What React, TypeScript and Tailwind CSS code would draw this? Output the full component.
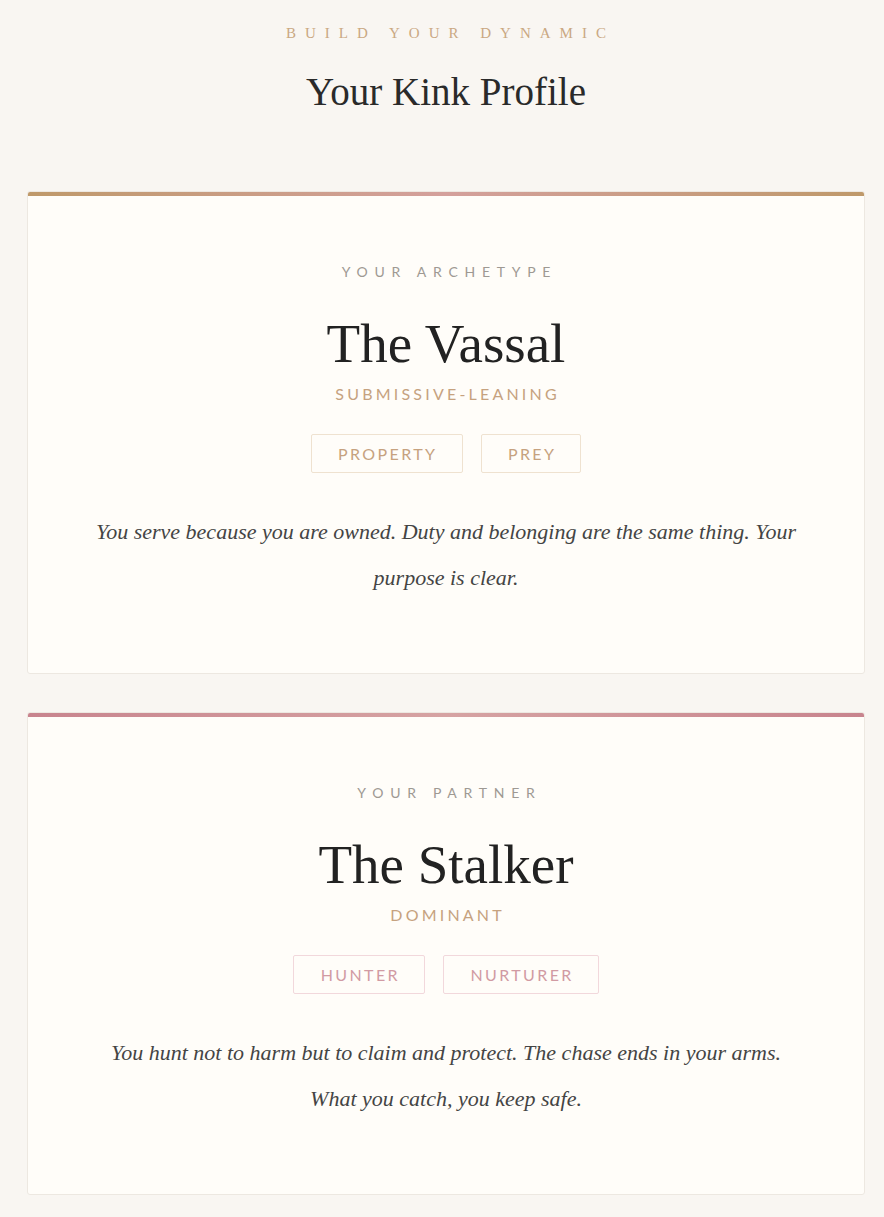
const SERIF = { fontFamily: '"Liberation Serif", "Times New Roman", serif' };
const SANS = { fontFamily: 'Lato, "Open Sans", sans-serif' };

type Tone = "gold" | "rose";

const TONES: Record<Tone, { bar: string; tag: string }> = {
  gold: {
    bar: "bg-linear-to-r from-[#bf996a] via-[#d4a09c] to-[#bf996a]",
    tag: "border-[#efe2d0] text-[#c6a27f]",
  },
  rose: {
    bar: "bg-linear-to-r from-[#c8848e] via-[#d6a3a3] to-[#c8848e]",
    tag: "border-[#f2d8dc] text-[#d19aa3]",
  },
};

function ProfileCard({
  label,
  name,
  leaning,
  tags,
  blurb,
  tone,
}: {
  label: string;
  name: string;
  leaning: string;
  tags: string[];
  blurb: string;
  tone: Tone;
}) {
  const t = TONES[tone];
  return (
    <div className="overflow-hidden rounded-[3px] border border-[#ede8e1] bg-[#fffdf9]">
      <div className={`h-[4px] ${t.bar}`} />
      <div className="flex flex-col items-center px-16 pt-[66px] pb-[72px] text-center">
        <p
          className="pl-[0.48em] text-[14px] leading-5 tracking-[0.48em] text-[#9e9993]"
          style={SANS}
        >
          {label}
        </p>
        <h2
          className="mt-[31px] text-[55px] leading-[62px] text-[#222]"
          style={SERIF}
        >
          {name}
        </h2>
        <p
          className="mt-[9px] pl-[0.2em] text-[16px] leading-5 tracking-[0.2em] text-[#c6a27f]"
          style={SANS}
        >
          {leaning}
        </p>
        <div className="mt-[30px] flex gap-[18px]">
          {tags.map((tag) => (
            <span
              key={tag}
              className={`rounded-[2px] border px-6 py-[9px] pl-[calc(1.5rem+0.15em)] text-[16px] leading-[19px] tracking-[0.15em] ${t.tag}`}
              style={SANS}
            >
              {tag}
            </span>
          ))}
        </div>
        <p
          className="mt-[36px] text-[22px] italic leading-[46px] text-[#444]"
          style={SERIF}
        >
          {blurb}
        </p>
      </div>
    </div>
  );
}

export default function App() {
  return (
    <div className="min-h-[1217px] bg-[#f9f6f2] pt-[22px] pr-[19px] pb-6 pl-[27px]">
      <header className="flex flex-col items-center">
        <p
          className="pl-[0.6em] text-[15px] leading-[22px] tracking-[0.6em] text-[#caa882]"
          style={SERIF}
        >
          BUILD YOUR DYNAMIC
        </p>
        <h1 className="mt-[24px] text-[39px] leading-[48px] text-[#2a2a2a]" style={SERIF}>
          Your Kink Profile
        </h1>
      </header>

      <div className="mt-[75px] flex flex-col gap-[38px]">
        <ProfileCard
          tone="gold"
          label="YOUR ARCHETYPE"
          name="The Vassal"
          leaning="SUBMISSIVE-LEANING"
          tags={["PROPERTY", "PREY"]}
          blurb="You serve because you are owned. Duty and belonging are the same thing. Your purpose is clear."
        />
        <ProfileCard
          tone="rose"
          label="YOUR PARTNER"
          name="The Stalker"
          leaning="DOMINANT"
          tags={["HUNTER", "NURTURER"]}
          blurb="You hunt not to harm but to claim and protect. The chase ends in your arms. What you catch, you keep safe."
        />
      </div>
    </div>
  );
}
